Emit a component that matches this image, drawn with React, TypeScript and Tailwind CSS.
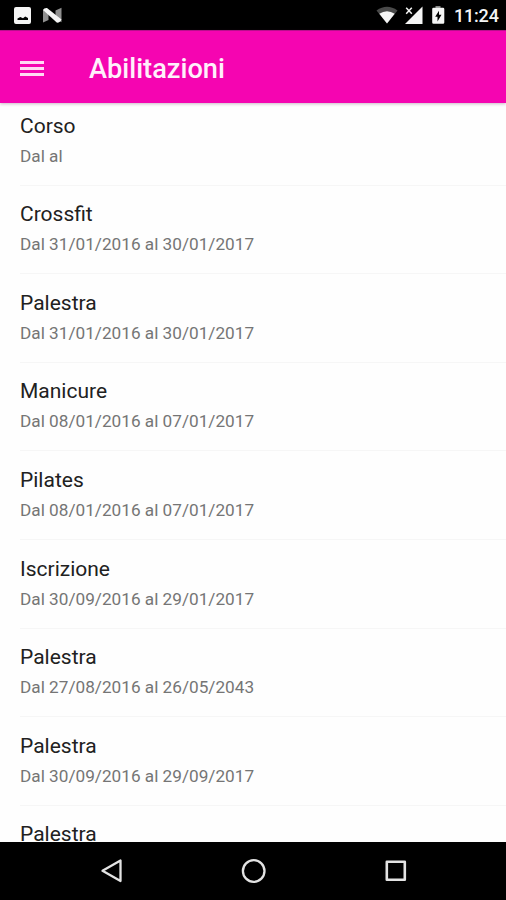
import { type SVGProps } from "react";

interface Enrollment {
  id: number;
  name: string;
  period?: { from: string; to: string };
}

const enrollments: Enrollment[] = [
  { id: 1, name: "Corso", period: { from: "", to: "" } },
  { id: 2, name: "Crossfit", period: { from: "31/01/2016", to: "30/01/2017" } },
  { id: 3, name: "Palestra", period: { from: "31/01/2016", to: "30/01/2017" } },
  { id: 4, name: "Manicure", period: { from: "08/01/2016", to: "07/01/2017" } },
  { id: 5, name: "Pilates", period: { from: "08/01/2016", to: "07/01/2017" } },
  { id: 6, name: "Iscrizione", period: { from: "30/09/2016", to: "29/01/2017" } },
  { id: 7, name: "Palestra", period: { from: "27/08/2016", to: "26/05/2043" } },
  { id: 8, name: "Palestra", period: { from: "30/09/2016", to: "29/09/2017" } },
  { id: 9, name: "Palestra" },
];

function Icon(props: SVGProps<SVGSVGElement>) {
  return <svg fill="currentColor" aria-hidden="true" {...props} />;
}

function StatusBar() {
  return (
    <div className="flex h-[30px] shrink-0 items-start bg-black pr-[9px] pl-[14px] text-[#f5f5f5]">
      <Icon className="mt-[7px] h-[17px] w-[17px]" viewBox="0 0 17 17">
        <path
          fillRule="evenodd"
          d="M2 0h13a2 2 0 0 1 2 2v13a2 2 0 0 1-2 2H2a2 2 0 0 1-2-2V2a2 2 0 0 1 2-2Zm1.500 13h10.500V11l-2.800-1.500-2.200 1.700L6.300 10 3.500 11.500Z"
        />
      </Icon>
      <Icon className="mt-[7px] ml-[11px] h-[17px] w-[20px]" viewBox="0 0 20 17">
        <path d="M1 2.500 6.500 5v8L1 15.500ZM19.500 .8 13.500 3.500v8l6 3.700Z" fill="#8f8f8f" />
        <path d="M1 3Q2 .8 5 1L19.500 12.500q-1 3-4.500 3.200Z" />
      </Icon>

      <Icon className="mt-[6px] ml-auto h-[18px] w-[22px]" viewBox="0 0 22 18">
        <path d="M.5 4.500Q11-3 21.500 4.500L11 17.500Z" fill="#4a4a4a" />
        <path d="M3.300 7.800Q11 2.800 18.700 7.800L11 17.500Z" />
      </Icon>
      <Icon className="mt-[6px] ml-[7px] h-[18px] w-[18px]" viewBox="0 0 18 18">
        <path d="M17.500.5V18H0L8 10 17.500.5Z" />
        <path d="m1.200 1.800 5.600 6M6.800 1.800l-5.600 6" stroke="currentColor" strokeWidth="1.500" fill="none" />
      </Icon>
      <Icon className="mt-[6px] ml-[9px] h-[18px] w-[13px]" viewBox="0 0 13 18">
        <path d="M3.500 0h5v2h-5Z" fill="#888" />
        <path
          fillRule="evenodd"
          d="M1.500 1.800h9.500q1.300 0 1.300 1.300v13.400q0 1.300-1.300 1.300H1.500q-1.300 0-1.300-1.300V3.100q0-1.300 1.300-1.300ZM7 4.700 3.200 10.800h2.300v4.600l4-6.600H7Z"
        />
      </Icon>
      <span className="mt-[4px] ml-[9px] w-[43px] text-[18px] leading-6 font-medium tracking-[-0.2px] whitespace-nowrap">
        11:24
      </span>
    </div>
  );
}

function AppBar() {
  return (
    <header className="relative z-10 flex h-[73px] shrink-0 items-center border-t border-[#b80e8c] bg-[#f505b1] pl-[20px] text-[#fff0fb] shadow-[0_1px_3px_rgba(90,20,70,0.3)]">
      <button type="button" aria-label="Menu" className="mt-[2px] flex w-6 flex-col gap-[3px]">
        <span className="h-[3px] w-full bg-[#ffd9f4]" />
        <span className="h-[3px] w-full bg-[#ffd9f4]" />
        <span className="h-[3px] w-full bg-[#ffd9f4]" />
      </button>
      <h1 className="mt-[3px] ml-[45px] text-[27.200px] leading-8 font-medium">Abilitazioni</h1>
    </header>
  );
}

function EnrollmentRow({ enrollment }: { enrollment: Enrollment }) {
  const { name, period } = enrollment;

  return (
    <li className="ml-[20px] h-[88.600px] shrink-0 border-b border-[#f6f6f6] pt-[15.600px]">
      <p className="text-[21px] leading-[26px] text-[#212121]">{name}</p>
      {period && (
        <p className="mt-[6px] text-[17.200px] leading-[22px] text-[#757575]">
          Dal {period.from} al {period.to}
        </p>
      )}
    </li>
  );
}

function NavBar() {
  return (
    <nav className="flex h-[58px] shrink-0 items-center justify-between bg-black pr-[98px] pl-[100px] text-[#e3e3e3]">
      <Icon className="h-[26px] w-[24px]" viewBox="0 0 24 26">
        <path d="M20.500 2.500v20.500L2.500 12.800Z" fill="none" stroke="currentColor" strokeWidth="2.300" strokeLinejoin="round" />
      </Icon>
      <Icon className="h-[26px] w-[26px]" viewBox="0 0 26 26">
        <circle cx="12.700" cy="13" r="10.800" fill="none" stroke="currentColor" strokeWidth="2.300" />
      </Icon>
      <Icon className="h-[24px] w-[24px]" viewBox="0 0 24 24">
        <rect x="2.800" y="2.800" width="18" height="18" fill="none" stroke="currentColor" strokeWidth="2.600" strokeLinejoin="round" />
      </Icon>
    </nav>
  );
}

export default function App() {
  return (
    <div className="flex h-screen flex-col overflow-hidden bg-[#fefefe] font-['Roboto','Liberation_Sans',sans-serif]">
      <StatusBar />
      <AppBar />
      {/* the list starts a few pixels under the app bar */}
      <ul className="-mt-[6px] flex min-h-0 flex-1 flex-col overflow-hidden">
        {enrollments.map((enrollment) => (
          <EnrollmentRow key={enrollment.id} enrollment={enrollment} />
        ))}
      </ul>
      <NavBar />
    </div>
  );
}
